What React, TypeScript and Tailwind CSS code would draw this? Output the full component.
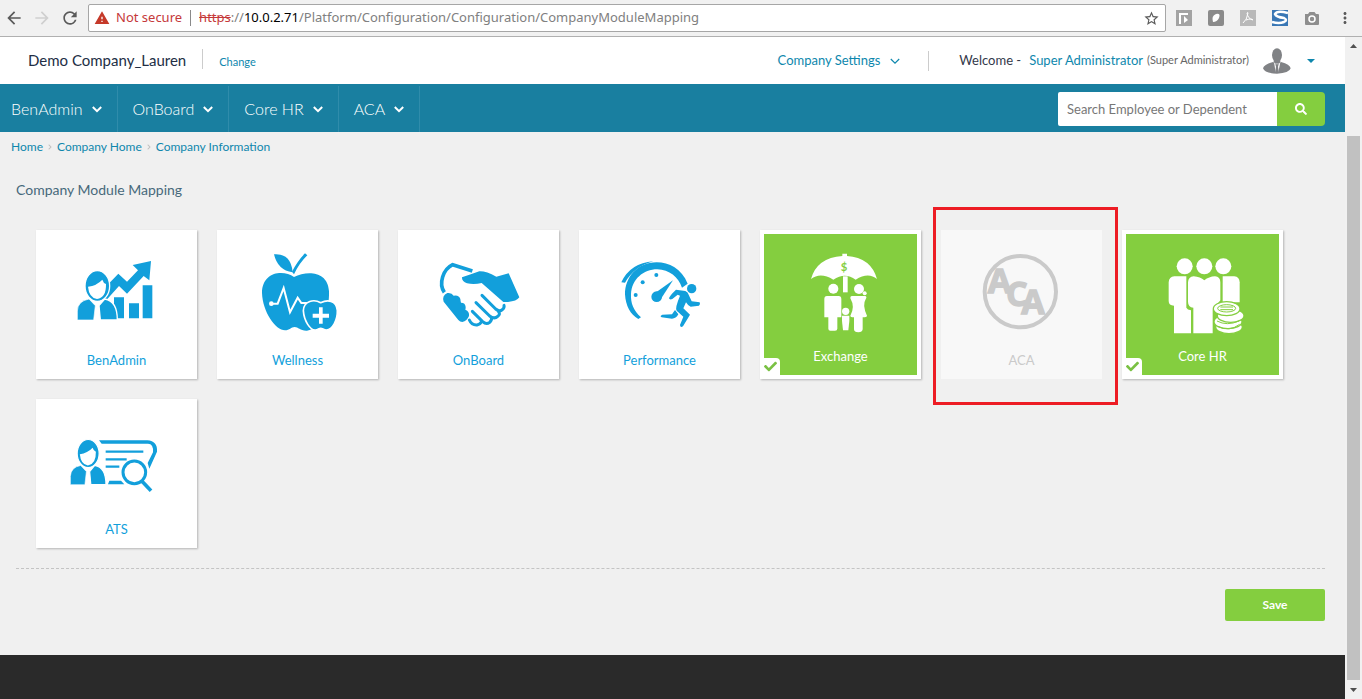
import { useState } from "react";
import type { ReactNode } from "react";
import {
  MdArrowBack,
  MdArrowForward,
  MdMoreVert,
  MdRefresh,
  MdStarBorder,
  MdWarning,
} from "react-icons/md";
import { FaCheck, FaChevronRight, FaSearch } from "react-icons/fa";

function Chevron({ size = 10, weight = 2 }: { size?: number; weight?: number }) {
  return (
    <svg width={size} height={size} viewBox="0 0 10 10" fill="none" stroke="currentColor" strokeWidth={weight} aria-hidden="true">
      <path d="M0.8 3 5 7.2 9.2 3" />
    </svg>
  );
}

function IconBox({ x, y = 77, children }: { x: number; y?: number; children: ReactNode }) {
  return (
    <svg className="size-24" viewBox={`${x} ${y} 288 288`} fill="currentColor" aria-hidden="true">
      {children}
    </svg>
  );
}

function Person() {
  return (
    <g>
      <path d="M172 299V272Q173 242 207 236L226 256L221 299Z" stroke="#fff" strokeWidth="2" />
      <path d="M241 299L237 256L254 236Q292 242 292 299Z" stroke="#fff" strokeWidth="4" />
      <ellipse cx="232" cy="197" rx="37" ry="46" stroke="#fff" strokeWidth="4" />
      <path d="M204 199Q230 196 247 178Q250 188 258 191Q259 232 231 236Q207 232 204 199Z" fill="#fff" />
    </g>
  );
}

function BenAdminIcon() {
  return (
    <IconBox x={147}>
      <path d="M255 236L266 190L295 160L321 184L354 150L338 134L393 122L388 180L371 167L321 220L297 197L262 236Z" />
      <path d="M282 231h30v63h-30zM327 249h30v45h-30zM368 195h29v99h-29z" />
      <Person />
    </IconBox>
  );
}

function WellnessIcon() {
  return (
    <IconBox x={149}>
      <path d="M221 102Q272 98 277 156Q232 150 221 102Z" />
      <path d="M275 154Q293 120 314 99L321 105Q297 128 281 162Z" />
      <path d="M281 170C250 147 185 153 185 218C187 275 226 330 254 330C268 330 272 320 283 320C294 320 300 332 320 331C365 325 388 270 386 213C382 150 318 152 281 170Z" />
      <path d="M213 250H232L250 203L269 276L292 232L303 248H322" fill="none" stroke="#fff" strokeWidth="6" />
      <circle cx="213" cy="250" r="7" fill="#fff" />
      <path
        d="M361 247C342 236 310 240 309 271C311 302 330 330 345 329C352 329 356 324 361 324C366 324 371 329 378 329C396 329 412 300 411 270C408 238 380 238 361 247Z"
        stroke="#fff"
        strokeWidth="5"
      />
      <path d="M356 261h11v19h19v12h-19v18h-11v-18h-19v-12h19z" fill="#fff" />
    </IconBox>
  );
}

function OnBoardIcon() {
  return (
    <IconBox x={138}>
      <path d="M178 216C160 190 174 147 203 133L262 152" fill="none" stroke="currentColor" strokeWidth="11" />
      <path d="M231 171Q258 162 283 153Q303 152 334 169L371 159L403 231Q393 246 355 245L290 188Q268 193 246 189Q230 183 231 171Z" />
      <path d="M176 244Q170 226 187 218Q200 216 206 226Q222 223 226 236Q227 245 228 247Q241 247 242 260Q242 266 241 268Q254 273 252 287Q246 302 232 305Q225 305 220 299Z" />
      <g fill="none" stroke="currentColor" strokeWidth="9" strokeLinecap="round" strokeLinejoin="round">
        <path d="M291 225L332 266Q344 276 352 268Q359 262 357 255" />
        <path d="M273 247L314 287Q328 298 338 288Q347 281 341 275" />
        <path d="M262 273L293 304Q304 314 314 306Q322 298 319 292" />
        <path d="M253 299Q260 315 276 314Q286 312 288 306" />
      </g>
    </IconBox>
  );
}

function PerformanceIcon() {
  return (
    <IconBox x={141}>
      <path d="M368 190C350 145 312 126 275 126C216 126 180 172 180 222C182 256 196 283 220 296L228 291C205 270 197 250 198 222C200 177 235 147 277 147C313 148 340 170 351 202Z" />
      <path d="M169 186Q196 128 265 123Q208 138 180 187Z" />
      <circle cx="274" cy="164" r="6" />
      <circle cx="233" cy="186" r="6" />
      <circle cx="212" cy="224" r="6" />
      <circle cx="275" cy="229" r="16" />
      <path d="M266 221L324 180L286 238Z" />
      <circle cx="380" cy="205" r="14" />
      <path d="M312 234Q312 228 333 208L361 212Q369 215 371 223L380 243L404 246Q407 252 402 256L377 259Q370 258 363 246L355 264L375 283L354 318Q346 324 345 314L355 289L335 271Q329 264 345 226L338 223L322 236Q314 239 312 234Z" />
      <path d="M330 269L340 282Q333 295 321 295L290 291Q283 287 292 283L321 282Z" />
    </IconBox>
  );
}

function ExchangeIcon() {
  return (
    <IconBox x={144}>
      <path d="M198 176Q216 112 292 107V100H306V107Q378 112 396 176Q370 154 332 178Q300 154 265 178Q226 154 198 176Z" />
      <text x="297" y="152" fill="#84ce3f" fontSize="34" fontWeight="700" textAnchor="middle">
        $
      </text>
      <path d="M294 168h14v48h-14z" />
      <circle cx="265" cy="205" r="15" />
      <path d="M246 227H281Q289 227 289 236V291H277V325Q277 331 270 331H256Q250 331 250 325V291H238V236Q238 227 246 227Z" />
      <circle cx="342" cy="206" r="15" />
      <circle cx="359" cy="219" r="6" />
      <path d="M320 227H361Q367 229 362 237Q351 254 366 286Q366 291 353 291V327Q352 336 340 336Q327 336 327 327V291Q316 291 316 286Q331 260 316 234Q315 228 320 227Z" />
      <circle cx="302" cy="273" r="11" />
      <path d="M291 286h22v16l-3 28h-16l-3-28z" />
    </IconBox>
  );
}

function AcaIcon() {
  return (
    <IconBox x={147} y={137}>
      <circle cx="286" cy="274" r="107" fill="none" stroke="currentColor" strokeWidth="12" />
      <text fontFamily="Open Sans, sans-serif" fontSize="102" fontWeight="700" stroke="currentColor" strokeWidth="4">
        <tspan x="188" y="278">A</tspan>
        <tspan x="243" y="316">C</tspan>
        <tspan x="289" y="342">A</tspan>
      </text>
    </IconBox>
  );
}

function CoreHrIcon() {
  return (
    <IconBox x={134}>
      <circle cx="223" cy="138" r="24" />
      <circle cx="282" cy="138" r="24" />
      <circle cx="339" cy="138" r="24" />
      <path d="M192 168H228V262Q231 268 242 270V339H191V256Q175 256 175 242V186Q176 169 192 168Z" />
      <path d="M250 168Q270 170 282 180Q296 169 314 168Q330 169 330 186V240L307 268V339H249V262Q233 260 233 244V186Q234 169 250 168Z" />
      <path d="M337 168H372Q387 169 388 186V246H337Z" />
      <g stroke="#84ce3f" strokeWidth="4">
        <ellipse cx="356" cy="320" rx="40" ry="20" />
        <ellipse cx="353" cy="304" rx="42" ry="21" />
        <ellipse cx="361" cy="286" rx="40" ry="20" />
        <ellipse cx="349" cy="265" rx="40" ry="21" />
      </g>
      <g fill="none" stroke="#84ce3f" strokeWidth="3">
        <ellipse cx="349" cy="264" rx="27" ry="11" />
        <path d="M330 260H368M330 268H368M324 319Q357 335 388 312M320 302Q350 318 386 302" />
      </g>
    </IconBox>
  );
}

function AtsIcon() {
  return (
    <IconBox x={147} y={74}>
      <path d="M237 150H382Q413 152 411 184L388 235L383 218L399 186Q401 160 384 160H245Z" />
      <path d="M257 184H370M257 207H320M257 229H298" fill="none" stroke="currentColor" strokeWidth="7" />
      <path d="M268 271H303L313 282H264Z" />
      <circle cx="343" cy="246" r="34" fill="#fff" stroke="currentColor" strokeWidth="9" />
      <path d="M366 273L393 301" stroke="currentColor" strokeWidth="11" />
      <g transform="translate(-2 9) scale(0.89 0.917)">
        <Person />
      </g>
    </IconBox>
  );
}

function AvatarIcon() {
  return (
    <svg className="h-[26px] w-7 text-[#808285]" viewBox="729 145 84 78" fill="currentColor" aria-hidden="true">
      <ellipse cx="771" cy="166" rx="15" ry="20" />
      <path d="M761 178H781V192H761Z" />
      <path d="M729 206Q732 194 759 187L771 196L783 187Q810 194 812 206Q808 221 771 222Q734 221 729 206Z" />
      <path d="M762 188L767 218H775L781 188L771 198Z" fill="#fff" />
      <path d="M766 194H776L774 201L777 220H765L768 201Z" />
    </svg>
  );
}

type Module = {
  name: string;
  icon: ReactNode;
  enabled?: boolean;
  disabled?: boolean;
};

const modules: Module[] = [
  { name: "BenAdmin", icon: <BenAdminIcon /> },
  { name: "Wellness", icon: <WellnessIcon /> },
  { name: "OnBoard", icon: <OnBoardIcon /> },
  { name: "Performance", icon: <PerformanceIcon /> },
  { name: "Exchange", icon: <ExchangeIcon />, enabled: true },
  { name: "ACA", icon: <AcaIcon />, disabled: true },
  { name: "Core HR", icon: <CoreHrIcon />, enabled: true },
  { name: "ATS", icon: <AtsIcon /> },
];

function tileClass(checked: boolean, disabled?: boolean) {
  if (disabled) return "bg-[#f8f8f8] pt-4 text-[#cacaca]";
  if (checked) return "cursor-pointer border-4 border-white bg-[#84ce3f] pt-3 text-white shadow-[1px_1px_2px_rgba(0,0,0,0.25)]";
  return "cursor-pointer bg-white pt-4 text-[#129fdb] shadow-[1px_1px_2px_rgba(0,0,0,0.25)]";
}

function ModuleTile({ module }: { module: Module }) {
  const [checked, setChecked] = useState(Boolean(module.enabled));

  return (
    <label className={`relative flex h-[149px] w-[161px] flex-col items-center ${tileClass(checked, module.disabled)}`}>
      <input
        type="checkbox"
        className="sr-only"
        checked={checked}
        disabled={module.disabled}
        onChange={(event) => setChecked(event.target.checked)}
      />
      {module.icon}
      <span className={`text-[13px] leading-5 ${checked ? "mt-1" : "mt-2"}`}>{module.name}</span>
      {checked ? (
        <span className="absolute bottom-0 left-0 flex h-[17px] w-4 items-center justify-start rounded-tr bg-white text-[#7ac143]">
          <FaCheck size={13} />
        </span>
      ) : null}
      {module.disabled ? <span className="absolute -top-[23px] -right-4 -bottom-[26px] -left-2 border-3 border-[#ed1c24]" /> : null}
    </label>
  );
}

function BrowserBar() {
  return (
    <div className="flex h-[37px] items-center border-b border-[#b0b0b0] bg-[#f1f1f1] pr-2 pl-1 text-[#5a5a5a]">
      <button type="button" aria-label="Back" className="w-7">
        <MdArrowBack size={20} />
      </button>
      <button type="button" aria-label="Forward" className="w-7 text-[#cfcfcf]">
        <MdArrowForward size={20} />
      </button>
      <button type="button" aria-label="Reload" className="w-7">
        <MdRefresh size={20} />
      </button>
      <div className="flex h-7 min-w-0 flex-1 items-center rounded-xs border border-[#a6a6a6] bg-white px-[5px] font-['Noto_Sans',sans-serif] text-[13px]">
        <MdWarning size={16} className="text-[#c53929]" />
        <span className="ml-1.5 whitespace-nowrap text-[#c5393a]">Not secure</span>
        <span className="mx-2 h-4 w-px bg-[#8a8a8a]" />
        <span className="min-w-0 flex-1 truncate text-[#808080]">
          <span className="text-[#c5393a] line-through">https</span>://<span className="text-black">10.0.2.71</span>
          /Platform/Configuration/Configuration/CompanyModuleMapping
        </span>
        <button type="button" aria-label="Bookmark this page">
          <MdStarBorder size={17} />
        </button>
      </div>
      <div className="ml-2.5 flex items-center gap-4">
        <svg className="size-4" viewBox="0 0 16 16" aria-hidden="true">
          <path d="M0 0h16v16H0z" fill="#a3a3a3" />
          <path d="M4 14V4h8" fill="none" stroke="#fff" strokeWidth="2" />
          <path d="M8 6l4 4-4 3z" fill="#fff" />
        </svg>
        <svg className="size-4" viewBox="0 0 16 16" aria-hidden="true">
          <rect width="16" height="16" rx="2" fill="#8b8b8b" />
          <path d="M5 12Q3 6 8 4Q13 3 11 8Q9 12 5 12Z" fill="#fff" />
        </svg>
        <svg className="size-4" viewBox="0 0 16 16" aria-hidden="true">
          <path d="M0 0h16v16H0z" fill="#b9b9b9" />
          <path d="M3 13Q7 10 8 3Q8 2 7 3Q8 9 13 10Q12 8 6 10" fill="none" stroke="#fff" />
        </svg>
        <svg className="size-4" viewBox="0 0 16 16" aria-hidden="true">
          <path d="M0 0h16v16H0z" fill="#3977b5" />
          <path d="M16 3Q5 0 3 4Q4 7 12 8Q16 10 12 12Q7 14 0 12" fill="none" stroke="#fff" strokeWidth="2.5" />
        </svg>
        <svg className="size-4" viewBox="0 0 16 16" aria-hidden="true">
          <path d="M1 4h3l1.500-2h5L12 4h2q1 0 1 1v9q0 1-1 1H2q-1 0-1-1z" fill="#8e8e8e" />
          <circle cx="8" cy="9" r="3" fill="#8e8e8e" stroke="#fff" strokeWidth="1.5" />
        </svg>
        <button type="button" aria-label="Menu">
          <MdMoreVert size={18} />
        </button>
      </div>
    </div>
  );
}

function Header() {
  return (
    <header className="flex h-[47px] items-center justify-between bg-white pr-[30px] pl-7 text-[13px]">
      <div className="flex items-center">
        <span className="text-[15px] text-[#222e45]">Demo Company_Lauren</span>
        <span className="mx-4 mb-1 h-5 w-px bg-[#cccccc]" />
        <a href="#change" className="mt-1 text-[11px] text-[#0e87ad]">
          Change
        </a>
      </div>
      <div className="flex items-center">
        <button type="button" className="flex items-center gap-2.5 text-[#0e87ad]">
          Company Settings
          <Chevron weight={1.2} />
        </button>
        <span className="mx-7 h-5 w-px bg-[#cccccc]" />
        <span className="ml-0.5 text-[#33394a]">Welcome -</span>
        <a href="#profile" className="ml-2 text-[#0e87ad]">
          Super Administrator
        </a>
        <span className="ml-1 text-[11px] text-[#666666]">(Super Administrator)</span>
        <button type="button" aria-label="Account" className="ml-3.5 flex items-center gap-4 text-[#0e87ad]">
          <AvatarIcon />
          <svg className="h-1 w-2" viewBox="0 0 8 4" fill="currentColor" aria-hidden="true">
            <path d="M0 0h8L4 4z" />
          </svg>
        </button>
      </div>
    </header>
  );
}

function NavBar() {
  return (
    <nav className="flex h-12 justify-between bg-[#197fa0] pr-5 text-white">
      <div className="flex pt-0.5">
        {["BenAdmin", "OnBoard", "Core HR", "ACA"].map((item) => (
          <button
            key={item}
            type="button"
            className="flex items-center gap-[9px] border-r border-[#2f8cab] px-[15px] text-base font-light first:pl-[11px]"
          >
            {item}
            <Chevron />
          </button>
        ))}
      </div>
      <form className="my-2 flex h-[34px]" onSubmit={(event) => event.preventDefault()}>
        <input
          type="search"
          aria-label="Search Employee or Dependent"
          placeholder="Search Employee or Dependent"
          className="w-[219px] rounded-l-xs bg-white px-[9px] pt-0.5 text-[13px] text-[#555555] outline-none placeholder:text-[#777777]"
        />
        <button type="submit" aria-label="Search" className="flex w-12 items-center justify-center rounded-r bg-[#84ce3f]">
          <FaSearch size={12} />
        </button>
      </form>
    </nav>
  );
}

function Breadcrumb() {
  return (
    <div className="flex items-center gap-1 px-[11px] pt-1.5 text-xs leading-[18px] text-[#0e87ad]">
      <a href="#home">Home</a>
      <FaChevronRight size={6} className="text-[#c0c0c0]" />
      <a href="#company-home">Company Home</a>
      <FaChevronRight size={6} className="text-[#c0c0c0]" />
      <a href="#company-information">Company Information</a>
    </div>
  );
}

function ScrollArrow({ d }: { d: string }) {
  return (
    <svg className="size-[17px]" viewBox="0 0 17 17" fill="currentColor" aria-hidden="true">
      <path d={d} />
    </svg>
  );
}

function ScrollBar() {
  return (
    <div className="flex w-[17px] flex-col items-center bg-[#f1f1f1] text-[#505050]">
      <ScrollArrow d="M5 11h7L8.500 7z" />
      <div className="mt-[82px] mb-0.5 w-[13px] flex-1 bg-[#c1c1c1]" />
      <ScrollArrow d="M5 6h7l-3.500 4z" />
    </div>
  );
}

export default function App() {
  return (
    <div className="flex min-h-screen flex-col bg-[#f0f0f0] font-['Lato',sans-serif]">
      <BrowserBar />
      <div className="flex flex-1">
        <div className="flex min-w-0 flex-1 flex-col">
          <Header />
          <NavBar />
          <main className="pb-[34px]">
            <Breadcrumb />
            <h1 className="px-4 pt-6 text-sm leading-5 text-[#47697b]">Company Module Mapping</h1>
            <form onSubmit={(event) => event.preventDefault()}>
              <div className="flex flex-wrap gap-5 px-9 pt-[30px] pb-5">
                {modules.map((module) => (
                  <ModuleTile key={module.name} module={module} />
                ))}
              </div>
              <div className="mr-5 ml-4 flex justify-end border-t border-dashed border-[#c4c4c4] pt-5">
                <button type="submit" className="h-8 w-[100px] rounded-xs bg-[#84ce3f] text-xs font-bold text-white">
                  Save
                </button>
              </div>
            </form>
          </main>
          <footer className="min-h-11 flex-1 bg-[#2a2a2a]" />
        </div>
        <ScrollBar />
      </div>
    </div>
  );
}
